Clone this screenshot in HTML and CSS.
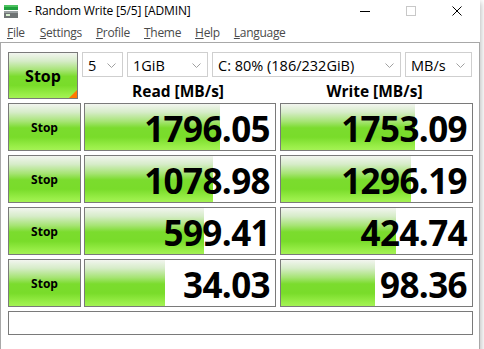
FILE: index.html
```html
<!DOCTYPE html>
<html>
<head>
<meta charset="utf-8">
<link rel="stylesheet" href="styles.css">
</head>
<body>
<div class="window">
  <div class="titlebar">
    <svg class="app-icon" width="16" height="15" viewBox="0 0 16 15">
      <rect x="1" y="1" width="14" height="5" fill="#1fa03c"/>
      <rect x="1" y="1" width="14" height="2" fill="#4cc25f"/>
      <rect x="1" y="7" width="14" height="7" fill="#6f7475"/>
      <rect x="1" y="7" width="14" height="2" fill="#9aa0a1"/>
      <rect x="3" y="10" width="4" height="2" fill="#d8f0d0"/>
    </svg>
    <span class="title">- Random Write [5/5] [ADMIN]</span>
    <div class="controls">
      <div class="ctl"><svg width="10" height="10" viewBox="0 0 10 10"><line x1="0" y1="5.5" x2="10" y2="5.5" stroke="#000" stroke-width="1"/></svg></div>
      <div class="ctl"><svg width="10" height="10" viewBox="0 0 10 10"><rect x="0.5" y="0.5" width="9" height="9" fill="none" stroke="#c8c8c8" stroke-width="1"/></svg></div>
      <div class="ctl"><svg width="10" height="10" viewBox="0 0 10 10"><path d="M0.5 0.5 L9.5 9.5 M9.5 0.5 L0.5 9.5" stroke="#000" stroke-width="1"/></svg></div>
    </div>
  </div>
  <div class="menubar">
    <span class="menu"><u>F</u>ile</span>
    <span class="menu"><u>S</u>ettings</span>
    <span class="menu"><u>P</u>rofile</span>
    <span class="menu"><u>T</u>heme</span>
    <span class="menu"><u>H</u>elp</span>
    <span class="menu"><u>L</u>anguage</span>
  </div>
  <div class="client">
    <div class="top">
      <div class="btn big-stop">Stop</div>
      <div class="top-right">
        <div class="combos">
          <div class="combo c-count"><span>5</span><svg class="chev" width="9" height="5" viewBox="0 0 9 5"><polyline points="0.5,0.5 4.5,4.5 8.5,0.5" fill="none" stroke="#a0a0a0" stroke-width="1"/></svg></div>
          <div class="combo c-size"><span>1GiB</span><svg class="chev" width="9" height="5" viewBox="0 0 9 5"><polyline points="0.5,0.5 4.5,4.5 8.5,0.5" fill="none" stroke="#a0a0a0" stroke-width="1"/></svg></div>
          <div class="combo c-drive"><span>C: 80% (186/232GiB)</span><svg class="chev" width="9" height="5" viewBox="0 0 9 5"><polyline points="0.5,0.5 4.5,4.5 8.5,0.5" fill="none" stroke="#a0a0a0" stroke-width="1"/></svg></div>
          <div class="combo c-unit"><span>MB/s</span><svg class="chev" width="9" height="5" viewBox="0 0 9 5"><polyline points="0.5,0.5 4.5,4.5 8.5,0.5" fill="none" stroke="#a0a0a0" stroke-width="1"/></svg></div>
        </div>
        <div class="headers">
          <div class="hdr">Read [MB/s]</div>
          <div class="hdr">Write [MB/s]</div>
        </div>
      </div>
    </div>
    <div class="results">
      <div class="btn stop">Stop</div>
      <div class="val" style="background-size: 135px 100%">1796.05</div>
      <div class="val" style="background-size: 134px 100%">1753.09</div>

      <div class="btn stop">Stop</div>
      <div class="val" style="background-size: 128px 100%">1078.98</div>
      <div class="val" style="background-size: 130px 100%">1296.19</div>

      <div class="btn stop">Stop</div>
      <div class="val" style="background-size: 119px 100%">599.41</div>
      <div class="val" style="background-size: 115px 100%">424.74</div>

      <div class="btn stop">Stop</div>
      <div class="val" style="background-size: 80px 100%">34.03</div>
      <div class="val" style="background-size: 94px 100%">98.36</div>
    </div>
    <div class="status"></div>
  </div>
</div>
</body>
</html>
```

FILE: styles.css
```css
html, body {
  margin: 0;
  padding: 0;
  background: #ffffff;
}
body {
  width: 484px;
  height: 349px;
  overflow: hidden;
  font-family: "Open Sans", "Noto Sans", sans-serif;
  color: #000;
}
.window {
  width: 480px;
  background: #fff;
  box-shadow: 1px 2px 6px rgba(0,0,0,0.28);
}
.titlebar {
  height: 22px;
  display: flex;
  align-items: center;
}
.app-icon {
  margin-left: 3px;
  margin-top: 1px;
  flex: none;
}
.title {
  margin-left: 9px;
  font-size: 12px;
  line-height: 22px;
  letter-spacing: -0.15px;
}
.controls {
  margin-left: auto;
  display: flex;
  height: 22px;
}
.ctl {
  width: 46px;
  display: flex;
  align-items: center;
  justify-content: center;
}
.menubar {
  height: 20px;
  display: flex;
  align-items: center;
  font-size: 12px;
  color: #4a4a4a;
  letter-spacing: -0.3px;
  padding-top: 1px;
  box-sizing: border-box;
}
.menu {
  padding: 0 7px;
}
.menu:first-child {
  padding-right: 8px;
}
.client {
  border: 1px solid #a8a8a8;
  height: 300px;
  padding: 9px 7px 0 7px;
  box-sizing: content-box;
}
.btn {
  box-sizing: border-box;
  border: 1px solid #7a7a7a;
  background: linear-gradient(to bottom, #f2f5ef 0%, #d6ecc8 18%, #a6e474 38%, #7bdc2e 52%, #79dc2a 72%, #99ee48 92%, #a4f255 100%);
  display: flex;
  align-items: center;
  justify-content: center;
  font-weight: 700;
}
.top {
  display: flex;
  gap: 4px;
}
.big-stop {
  width: 73px;
  height: 47px;
  font-size: 16px;
  position: relative;
}
.big-stop::after {
  content: "";
  position: absolute;
  right: 0;
  bottom: 0;
  width: 0;
  height: 0;
  border-style: solid;
  border-width: 0 0 8px 8px;
  border-color: transparent transparent #ff7a00 transparent;
}
.top-right {
  display: flex;
  flex-direction: column;
}
.combos {
  display: flex;
  gap: 4px;
  height: 25px;
}
.combo {
  box-sizing: border-box;
  height: 25px;
  border: 1px solid #cfcfcf;
  background: #fff;
  display: flex;
  align-items: center;
  padding: 1px 6px 0 5px;
  font-size: 14.5px;
  letter-spacing: 0;
}
.combo span {
  flex: 1;
  white-space: nowrap;
}
.chev {
  flex: none;
}
.c-count { width: 41px; }
.c-size { width: 81px; }
.c-drive { width: 189px; }
.c-unit { width: 67px; }
.headers {
  display: flex;
  gap: 4px;
  height: 22px;
}
.hdr {
  width: 192px;
  text-align: center;
  font-weight: 700;
  font-size: 15.5px;
  line-height: 20px;
  padding-top: 4px;
  letter-spacing: 0;
  white-space: nowrap;
}
.hdr:last-child {
  width: 193px;
}
.results {
  margin-top: 4px;
  display: grid;
  grid-template-columns: 73px 192px 193px;
  grid-auto-rows: 48px;
  column-gap: 3px;
  row-gap: 4px;
}
.results .val:nth-child(3n) {
  margin-left: 1px;
  width: 193px;
}
.stop {
  font-size: 12px;
  height: 48px;
}
.val {
  box-sizing: border-box;
  border: 1px solid #7a7a7a;
  background-color: #fff;
  background-image: linear-gradient(to bottom, #f2f5ef 0%, #d6ecc8 18%, #a6e474 38%, #7bdc2e 52%, #79dc2a 72%, #99ee48 92%, #a4f255 100%);
  background-repeat: no-repeat;
  background-position: left top;
  text-align: right;
  font-weight: 700;
  font-size: 35px;
  line-height: 46px;
  padding: 2px 5px 0 0;
  letter-spacing: -0.6px;
  height: 48px;
}
.status {
  margin-top: 4px;
  box-sizing: border-box;
  height: 24px;
  width: 465px;
  border: 1px solid #7a7a7a;
  background: #fff;
}
```
